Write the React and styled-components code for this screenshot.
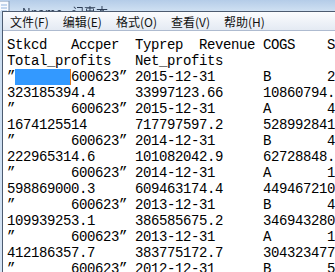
import React from 'react';
import styled, { createGlobalStyle } from 'styled-components';

const GlobalStyle = createGlobalStyle`
  html, body {
    margin: 0;
    padding: 0;
    background: #ffffff;
  }
  body {
    width: 335px;
    height: 272px;
    overflow: hidden;
  }
`;

const menus = ['文件(F)', '编辑(E)', '格式(O)', '查看(V)', '帮助(H)'];

const header = ['Stkcd', 'Accper', 'Typrep', 'Revenue', 'COGS', 'Sellexp'];
const header2 = ['Total_profits', 'Net_profits'];

const records = [
  { date: '2015-12-31', kind: 'B', next: '2', profit: '323185394.4', net: '33997123.66', cogs: '10860794.35' },
  { date: '2015-12-31', kind: 'A', next: '4', profit: '1674125514', net: '717797597.2', cogs: '528992841.6' },
  { date: '2014-12-31', kind: 'B', next: '4', profit: '222965314.6', net: '101082042.9', cogs: '62728848.21' },
  { date: '2014-12-31', kind: 'A', next: '1', profit: '598869000.3', net: '609463174.4', cogs: '449467210.3' },
  { date: '2013-12-31', kind: 'B', next: '4', profit: '109939253.1', net: '386585675.2', cogs: '346943280.1' },
  { date: '2013-12-31', kind: 'A', next: '1', profit: '412186357.7', net: '383775172.7', cogs: '304323477.5' },
  { date: '2012-12-31', kind: 'B', next: '5', profit: '', net: '', cogs: '' },
];

const cols = (parts, w) => parts.map((p, i) => (i < parts.length - 1 ? p.padEnd(w) : p)).join('');

function Notepad() {
  return (
    <Window>
      <TitleBar>
        <svg width="12" height="16" viewBox="0 0 12 16">
          <rect x="1" y="0" width="10" height="15" fill="#f8fbff" stroke="#7d95b3" />
          <line x1="3" y1="4" x2="9" y2="4" stroke="#8fb3de" />
          <line x1="3" y1="7" x2="9" y2="7" stroke="#8fb3de" />
          <line x1="3" y1="10" x2="9" y2="10" stroke="#8fb3de" />
        </svg>
        <Title>Nname - 记事本</Title>
      </TitleBar>
      <Client>
        <MenuBar>
          {menus.map(m => (
            <MenuItem key={m}>{m}</MenuItem>
          ))}
        </MenuBar>
        <TextArea>
          <Line>{cols(header, 8)}</Line>
          <Line>{cols(header2, 16)}</Line>
          {records.map((r, i) => (
            <React.Fragment key={i}>
              <Line>
                ”{i === 0 ? <Selection>{'       '}</Selection> : '       '}
                {'600623” ' + r.date.padEnd(16) + r.kind.padEnd(8) + r.next + '7012'}
              </Line>
              {r.profit && <Line>{cols([r.profit, r.net, r.cogs], 16)}</Line>}
            </React.Fragment>
          ))}
        </TextArea>
      </Client>
    </Window>
  );
}

export default function App() {
  return (
    <>
      <GlobalStyle />
      <Notepad />
    </>
  );
}

const Window = styled.div`
  width: 335px;
  height: 272px;
  display: flex;
  flex-direction: column;
  overflow: hidden;
  background: linear-gradient(#c9dcf0, #d6e4f4);
`;

const TitleBar = styled.div`
  height: 11px;
  flex: none;
  display: flex;
  align-items: flex-end;
  gap: 12px;
  overflow: hidden;
  background: linear-gradient(#b4cce8, #cfe0f2);

  svg {
    flex: none;
    margin-bottom: -6px;
    margin-left: -2px;
  }
`;

const Title = styled.span`
  font-family: "Noto Sans CJK SC", "Liberation Sans", sans-serif;
  font-size: 12px;
  line-height: 16px;
  margin-bottom: -9px;
  color: #2a3a52;
  filter: blur(0.6px);
`;

const Client = styled.div`
  flex: 1;
  min-height: 0;
  margin-left: 2px;
  display: flex;
  flex-direction: column;
  border-top: 1px solid #4c5b70;
  border-left: 1px solid #4c5b70;
`;

const MenuBar = styled.div`
  height: 18px;
  flex: none;
  display: flex;
  align-items: center;
  gap: 14px;
  padding-left: 7px;
  border-bottom: 1px solid #aebbd0;
  background: linear-gradient(#fbfcfe, #e4eaf3);
`;

const MenuItem = styled.span`
  font-family: "Noto Sans CJK SC", "Liberation Sans", sans-serif;
  font-size: 12px;
  line-height: 16px;
  padding-top: 2px;
  color: #111;
  white-space: nowrap;
`;

const TextArea = styled.div`
  flex: 1;
  min-height: 0;
  background: #ffffff;
  padding: 6px 0 0 4px;
  overflow: hidden;
`;

const Line = styled.div`
  height: 16px;
  font-family: "Liberation Mono", "DejaVu Sans Mono", monospace;
  font-size: 14px;
  letter-spacing: -0.4px;
  line-height: 16px;
  white-space: pre;
  color: #000;
`;

const Selection = styled.span`
  display: inline-block;
  height: 16px;
  vertical-align: top;
  background: #3399ff;
  box-shadow: inset -1px 0 0 #e0781c;
`;
